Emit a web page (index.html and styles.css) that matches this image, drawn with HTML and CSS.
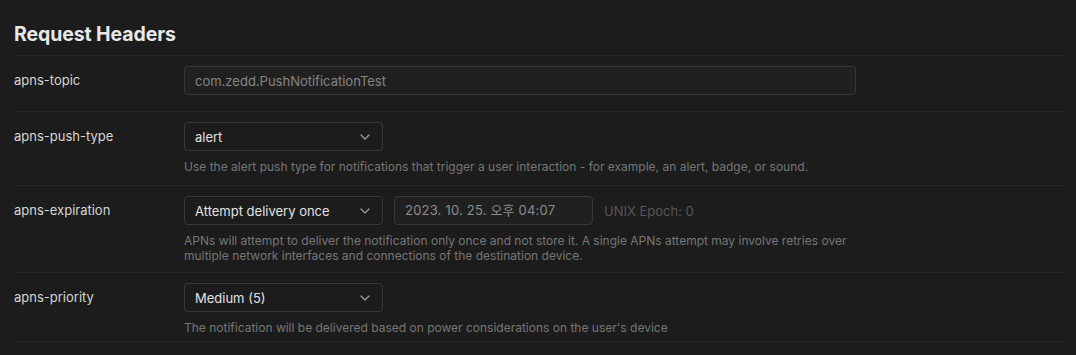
FILE: index.html
```html
<!DOCTYPE html>
<html lang="en">
<head>
    <meta charset="UTF-8">
    <meta name="viewport" content="width=device-width, initial-scale=1.0">
    <title>Request Headers</title>
    <link rel="stylesheet" href="styles.css">
</head>
<body>

<div class="panel">
    <h2 class="title">Request Headers</h2>

    <div class="row row-topic">
        <div class="label">apns-topic</div>
        <div class="field">
            <input type="text" class="text-input wide" placeholder="com.zedd.PushNotificationTest">
        </div>
    </div>

    <div class="row row-push">
        <div class="label">apns-push-type</div>
        <div class="field">
            <div class="select">
                <span>alert</span>
                <svg class="chevron" width="10" height="6" viewBox="0 0 10 6"><path d="M1 1l4 4 4-4" fill="none" stroke="currentColor" stroke-width="1.3" stroke-linecap="round" stroke-linejoin="round"/></svg>
            </div>
            <p class="help">Use the alert push type for notifications that trigger a user interaction - for example, an alert, badge, or sound.</p>
        </div>
    </div>

    <div class="row row-expiration">
        <div class="label">apns-expiration</div>
        <div class="field">
            <div class="inline">
                <div class="select">
                    <span>Attempt delivery once</span>
                    <svg class="chevron" width="10" height="6" viewBox="0 0 10 6"><path d="M1 1l4 4 4-4" fill="none" stroke="currentColor" stroke-width="1.3" stroke-linecap="round" stroke-linejoin="round"/></svg>
                </div>
                <div class="text-input date">2023. 10. 25. 오후 04:07</div>
                <span class="epoch">UNIX Epoch: 0</span>
            </div>
            <p class="help narrow">APNs will attempt to deliver the notification only once and not store it. A single APNs attempt may involve retries over multiple network interfaces and connections of the destination device.</p>
        </div>
    </div>

    <div class="row row-priority">
        <div class="label">apns-priority</div>
        <div class="field">
            <div class="select">
                <span>Medium (5)</span>
                <svg class="chevron" width="10" height="6" viewBox="0 0 10 6"><path d="M1 1l4 4 4-4" fill="none" stroke="currentColor" stroke-width="1.3" stroke-linecap="round" stroke-linejoin="round"/></svg>
            </div>
            <p class="help">The notification will be delivered based on power considerations on the user's device</p>
        </div>
    </div>
</div>

</body>
</html>
```

FILE: styles.css
```css
body {
    margin: 0;
    background-color: #1c1c1c;
    font-family: 'Inter', 'Noto Sans CJK KR', sans-serif;
    color: #dcdcdc;
    -webkit-font-smoothing: antialiased;
}
.panel {
    padding: 0 10px 0 14px;
}
.title {
    margin: 0;
    padding: 23px 0 10px;
    font-size: 19.5px;
    line-height: 22px;
    font-weight: 700;
    color: #e8e8e8;
    letter-spacing: -0.1px;
    border-bottom: 1px solid #272727;
}
.row {
    display: flex;
    padding: 10px 0 7px;
    border-bottom: 1px solid #272727;
}
.row-topic {
    padding-bottom: 16px;
}
.row-push {
    padding-bottom: 11px;
}
.row-expiration {
    padding-bottom: 9px;
}
.row-priority {
    padding-bottom: 6px;
}
.label {
    width: 170px;
    flex-shrink: 0;
    font-size: 13px;
    line-height: 29px;
    color: #d6d6d6;
}
.field {
    display: flex;
    flex-direction: column;
}
.inline {
    display: flex;
    align-items: center;
    gap: 11px;
}
.text-input {
    box-sizing: border-box;
    height: 29px;
    padding: 0 10px;
    background-color: #202020;
    border: 1px solid #383838;
    border-radius: 4px;
    font-family: inherit;
    font-size: 13px;
    line-height: 27px;
    color: #8a8a8a;
    outline: none;
}
.text-input::placeholder {
    color: #858585;
}
.wide {
    width: 672px;
}
.date {
    width: 199px;
    color: #8c8c8c;
    letter-spacing: 0.2px;
}
.epoch {
    font-size: 13px;
    color: #575757;
}
.select {
    box-sizing: border-box;
    width: 199px;
    height: 29px;
    padding: 0 12px 0 10px;
    display: flex;
    align-items: center;
    justify-content: space-between;
    background-color: #1c1c1c;
    border: 1px solid #383838;
    border-radius: 4px;
    font-size: 13px;
    color: #e2e2e2;
}
.chevron {
    color: #9a9a9a;
}
.help {
    margin: 8px 0 0;
    font-size: 12px;
    line-height: 15px;
    color: #767676;
}
.narrow {
    max-width: 690px;
}
```
